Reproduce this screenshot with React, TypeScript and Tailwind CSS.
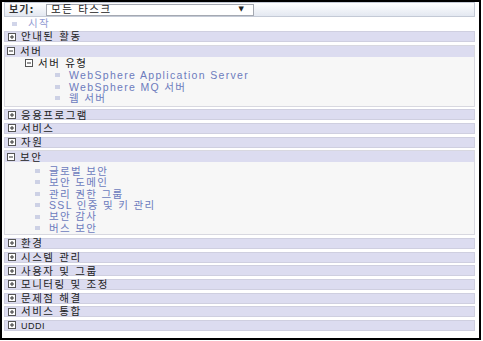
import React from 'react';

const FONT = { fontFamily: '"DejaVu Sans", "Noto Sans CJK KR", sans-serif' };
const LINK_FONT = { fontFamily: '"Liberation Sans", "Noto Sans CJK KR", sans-serif' };

// small +/- box used on every section header
const Toggle: React.FC<{ open?: boolean }> = ({ open }) => (
  <svg width="8" height="8" viewBox="0 0 8 8" className="shrink-0">
    <rect x="0.5" y="0.5" width="7" height="7" fill="#fff" stroke="#555" />
    <line x1="2" y1="4" x2="6" y2="4" stroke="#333" />
    {!open && <line x1="4" y1="2" x2="4" y2="6" stroke="#333" />}
  </svg>
);

const Bullet: React.FC = () => (
  <svg width="5" height="4" viewBox="0 0 5 4" className="shrink-0">
    <rect x="0" y="0.5" width="5" height="1" fill="#a3acd4" />
    <rect x="0" y="2.5" width="5" height="1" fill="#a3acd4" />
  </svg>
);

const Bar: React.FC<{ label: React.ReactNode; open?: boolean }> = ({ label, open }) => (
  <div className="h-[11px] flex items-center gap-[5px] pl-[3px] bg-[#dcdcf0] border border-[#cfcfe0] text-[10.5px] leading-none tracking-[1.5px] text-[#222]">
    <Toggle open={open} />
    <span>{label}</span>
  </div>
);

const LinkRow: React.FC<{ label: string; indent: string; h: string }> = ({ label, indent, h }) => (
  <div
    className={`flex items-center gap-[9px] ${indent} ${h} text-[10.5px] leading-none tracking-[1.33px] text-[#6c7bbd]`}
    style={LINK_FONT}
  >
    <Bullet />
    <span>{label}</span>
  </div>
);

const closedTop = ['응용프로그램', '서비스', '자원'];
const closedBottom = ['환경', '시스템 관리', '사용자 및 그룹', '모니터링 및 조정', '문제점 해결', '서비스 통합'];
const securityItems = ['글로벌 보안', '보안 도메인', '관리 권한 그룹', 'SSL 인증 및 키 관리', '보안 감사', '버스 보안'];

export default function App() {
  return (
    <div className="w-[483px] h-[341px] bg-white" style={FONT}>
      <div className="w-[481px] h-[340px] border-2 border-black pl-[2px] pr-[4px] flex flex-col">
        {/* view selector */}
        <div className="h-[15px] flex items-center border border-[#c4cad6] bg-gradient-to-b from-white to-[#e3e8f1]">
          <span className="pl-[4px] w-[41px] text-[10px] font-bold tracking-[1px] text-[#333]">보기:</span>
          <div className="h-[12px] w-[208px] flex items-center justify-between bg-white border border-[#a5a9b2] pl-[4px] pr-[9px]">
            <span className="text-[10.5px] leading-none tracking-[1.5px] text-[#222]">모든 타스크</span>
            <span className="text-[7px] leading-none text-[#222]">▼</span>
          </div>
        </div>

        {/* start */}
        <div
          className="h-[13px] flex items-center gap-[11px] pl-[8px] text-[10.5px] leading-none tracking-[1.33px] text-[#8f9ad2]"
          style={LINK_FONT}
        >
          <Bullet />
          <span>시작</span>
        </div>

        <div className="flex flex-col gap-[2.67px] mt-[1px]">
          <Bar label="안내된 활동" />

          {/* servers */}
          <div className="h-[62px] flex flex-col border border-[#d8d8e0] bg-[#f7f7f7]">
            <div className="h-[11px] flex items-center gap-[5px] pl-[2px] bg-[#dcdcf0] text-[10.5px] leading-none tracking-[1.5px] text-[#222]">
              <Toggle open />
              <span>서버</span>
            </div>
            <div className="flex flex-col pt-[1px]">
              <div className="h-[11.67px] flex items-center gap-[5px] pl-[20px] text-[10.5px] leading-none tracking-[1.5px] text-[#222]">
                <Toggle open />
                <span>서버 유형</span>
              </div>
              <LinkRow label="WebSphere Application Server" indent="pl-[50px]" h="h-[11.67px]" />
              <LinkRow label="WebSphere MQ 서버" indent="pl-[50px]" h="h-[11.67px]" />
              <LinkRow label="웹 서버" indent="pl-[50px]" h="h-[11.67px]" />
            </div>
          </div>

          {closedTop.map((l) => (
            <Bar key={l} label={l} />
          ))}

          {/* security */}
          <div className="h-[85px] flex flex-col border border-[#d8d8e0] bg-[#f7f7f7]">
            <div className="h-[11px] flex items-center gap-[5px] pl-[2px] bg-[#dcdcf0] text-[10.5px] leading-none tracking-[1.5px] text-[#222]">
              <Toggle open />
              <span>보안</span>
            </div>
            <div className="flex flex-col pt-[3px]">
              {securityItems.map((l) => (
                <LinkRow key={l} label={l} indent="pl-[30px]" h="h-[11.4px]" />
              ))}
            </div>
          </div>

          {closedBottom.map((l) => (
            <Bar key={l} label={l} />
          ))}
          <Bar label={<span className="text-[9px] tracking-[0.5px]" style={{ fontFamily: '"Liberation Sans", sans-serif' }}>UDDI</span>} />
        </div>
      </div>
    </div>
  );
}
